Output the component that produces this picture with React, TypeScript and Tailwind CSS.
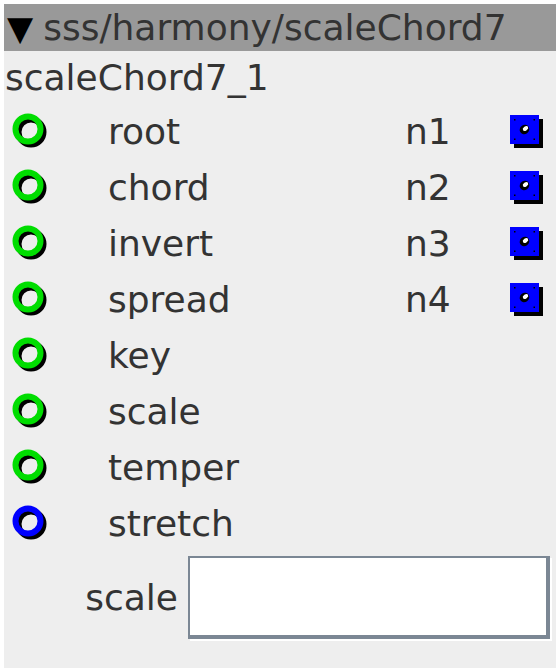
const inputs = [
  { name: "root", out: "n1" },
  { name: "chord", out: "n2" },
  { name: "invert", out: "n3" },
  { name: "spread", out: "n4" },
  { name: "key" },
  { name: "scale" },
  { name: "temper" },
  { name: "stretch", blue: true },
];

function Inlet({ blue }: { blue?: boolean }) {
  return (
    <svg width="38" height="38" viewBox="0 0 38 38">
      <circle cx="19" cy="19" r="12.5" fill="none" stroke="#000" strokeWidth="6" />
      <circle cx="16" cy="16" r="12.5" fill="none" stroke={blue ? "#0000ff" : "#00dd00"} strokeWidth="6" />
    </svg>
  );
}

function Outlet() {
  return (
    <svg width="36" height="36" viewBox="0 0 36 36">
      <rect x="5" y="5" width="29" height="29" fill="#000" />
      <rect x="1" y="1" width="29" height="29" fill="#0000ff" />
      <ellipse cx="15.5" cy="15.5" rx="5" ry="4.5" fill="#000" transform="rotate(-35 15.5 15.5)" />
      <ellipse cx="16.5" cy="14.5" rx="3" ry="2" fill="#fff" transform="rotate(-35 16.5 14.5)" />
      <rect x="5" y="5" width="1.5" height="1.5" fill="#000" />
      <rect x="24.5" y="5" width="1.5" height="1.5" fill="#000" />
      <rect x="5" y="24.5" width="1.5" height="1.5" fill="#000" />
      <rect x="24.5" y="24.5" width="1.5" height="1.5" fill="#000" />
    </svg>
  );
}

export default function App() {
  return (
    <div className="w-[560px] h-[672px] bg-white p-1 font-['DejaVu_Sans',sans-serif] text-[#333]">
      <div className="w-[552px] h-[664px] bg-[#eeeeee] flex flex-col">
        {/* header */}
        <div className="h-[47px] bg-[#999999] flex items-center pl-[3px] text-[36px] leading-none">
          <span className="text-black text-[34px] mr-[10px]">▼</span>
          <span>sss/harmony/scaleChord7</span>
        </div>
        <div className="h-[53px] flex items-center pl-[1px] text-[36px] leading-none">scaleChord7_1</div>

        {/* ports */}
        <div className="flex flex-col">
          {inputs.map((p) => (
            <div key={p.name} className="h-[56px] flex items-center text-[36px] leading-none">
              <div className="w-[100px] pl-[8px] flex items-center">
                <Inlet blue={p.blue} />
              </div>
              <div className="w-[301px] pl-[4px]">{p.name}</div>
              <div className="w-[104px]">{p.out}</div>
              {p.out && <Outlet />}
            </div>
          ))}
        </div>

        {/* parameter */}
        <div className="mt-[4px] flex items-center">
          <div className="w-[184px] pr-[10px] text-right text-[36px] leading-none">scale</div>
          <div className="w-[362px] h-[83px] bg-white border-t-2 border-l-2 border-r-4 border-b-4 border-[#7b8794] shadow-[2px_2px_0_0_#ffffff]" />
        </div>
      </div>
    </div>
  );
}
